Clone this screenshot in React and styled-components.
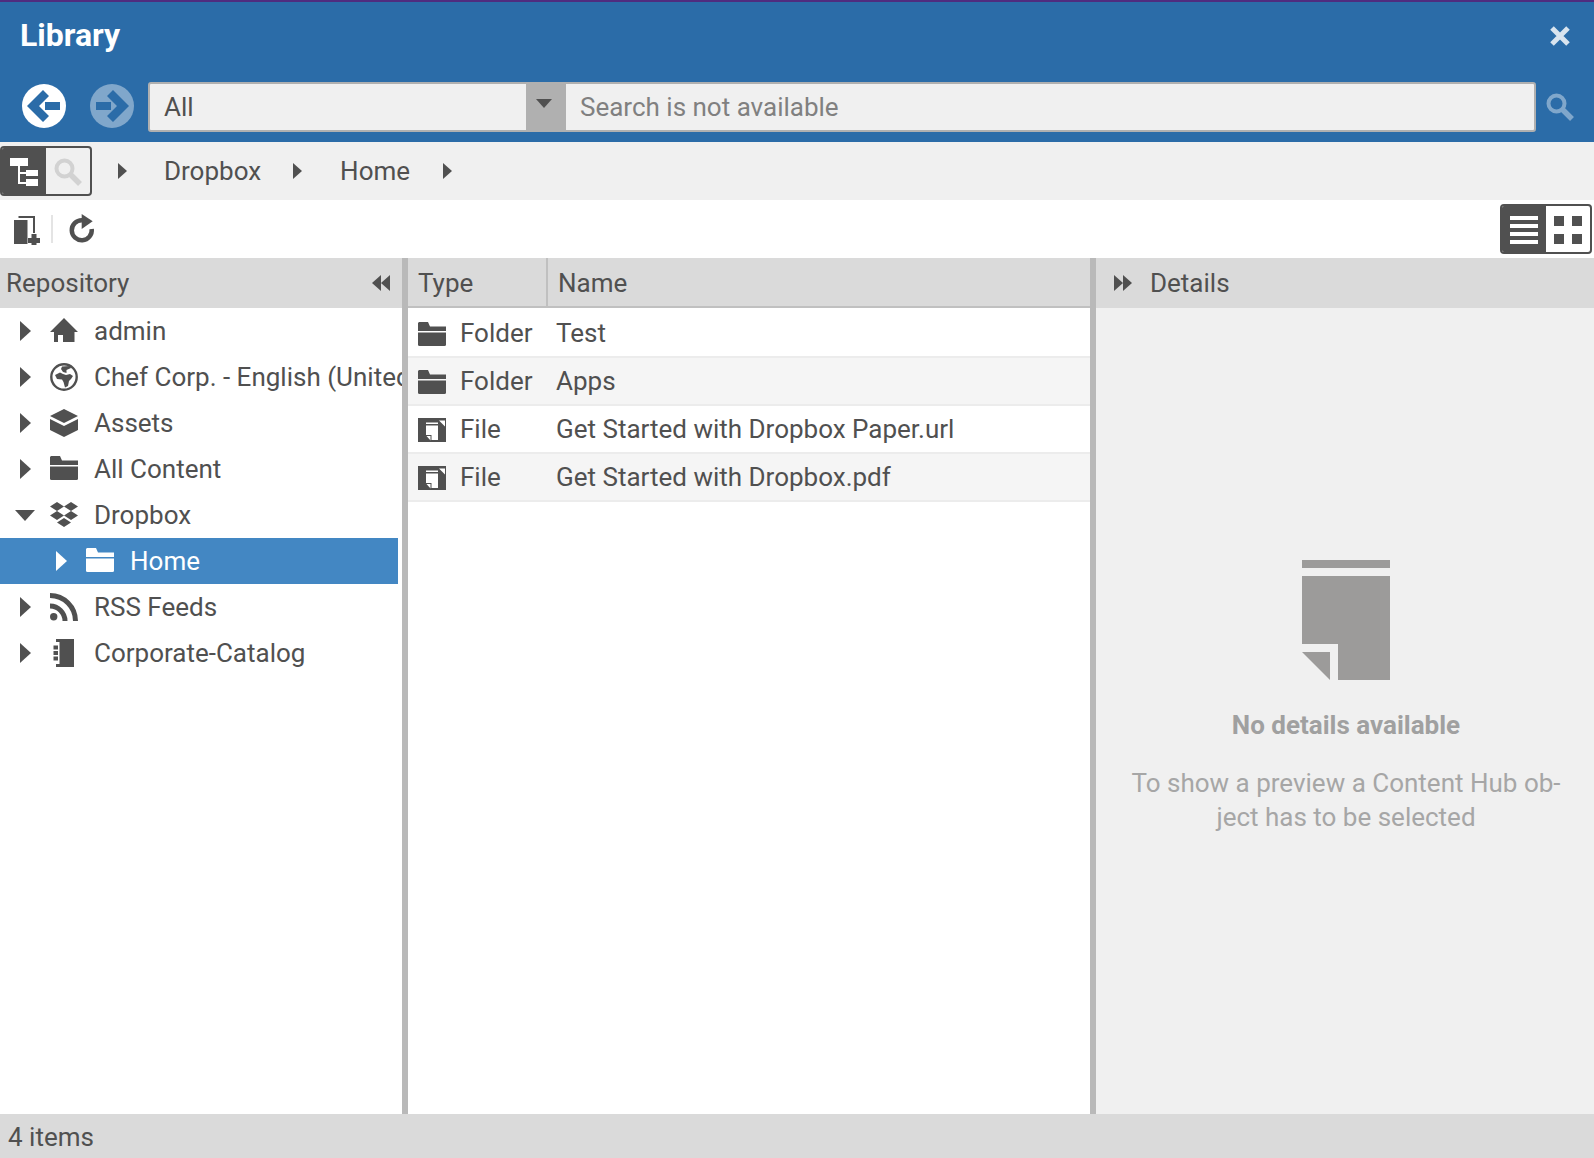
import React from "react";
import styled, { createGlobalStyle } from "styled-components";

const Global = createGlobalStyle`
  html, body { margin: 0; padding: 0; height: 100%; background: #fff; }
  #root { height: 100%; }
  * { box-sizing: border-box; }
`;

const Dark = "#505050";

const Page = styled.div`
  width: 1594px; height: 1158px; display: flex; flex-direction: column; overflow: hidden;
  font-family: Roboto, "Liberation Sans", sans-serif; font-size: 26px; color: ${Dark};
`;
const TopBar = styled.header`
  height: 142px; flex: none; background: #2b6ca8; border-top: 2px solid #4f2c7f;
  display: flex; flex-direction: column;
`;
const TitleRow = styled.div`
  height: 66px; display: flex; align-items: center; justify-content: space-between; padding: 0 24px 0 20px;
`;
const Title = styled.h1`
  margin: 0; font-size: 32px; font-weight: 700; color: #fff; line-height: 1;
`;
const CloseIcon = styled.svg`
  display: block; margin-top: 2px;
`;
const SearchRow = styled.div`
  display: flex; align-items: center; margin-top: 14px; padding-left: 22px; height: 50px;
`;
const NavButton = styled.span`
  width: 44px; height: 44px; flex: none; margin: -2px 24px 0 0; display: block;
  &:nth-child(2) { margin-right: 14px; opacity: 0.4; }
  svg { display: block; }
`;
const SearchBox = styled.div`
  width: 1388px; height: 50px; flex: none; display: flex; border: 2px solid #b0b0b0; border-radius: 3px; background: #f0f0f0;
`;
const ScopeValue = styled.div`
  width: 376px; padding-left: 14px; display: flex; align-items: center; color: ${Dark};
`;
const ScopeArrow = styled.div`
  width: 40px; background: #b0b0b0; display: flex; align-items: flex-start; justify-content: center; padding: 15px 4px 0 0;
`;
const SearchText = styled.div`
  flex: 1; padding-left: 14px; display: flex; align-items: center; color: #808080;
`;
const SearchIcon = styled.span`
  margin-left: 10px; display: block; opacity: 0.4; svg { display: block; }
`;
const CrumbBar = styled.nav`
  height: 58px; flex: none; background: #f0f0f0; display: flex; align-items: center;
`;
const Toggle = styled.div`
  width: ${p => p.$w}px; height: 50px; flex: none; display: flex; border: 2px solid ${Dark}; border-radius: 4px; overflow: hidden; background: ${p => p.$bg || "#fff"};
`;
const ToggleHalf = styled.span`
  flex: 1; display: flex; align-items: center; justify-content: center; padding-top: 2px; background: ${p => (p.$on ? Dark : "transparent")};
`;
const CrumbArrow = styled.span`
  display: block; flex: none; width: 0; height: 0; margin-left: ${p => p.$ml}px;
  border-left: 9px solid ${Dark}; border-top: 8px solid transparent; border-bottom: 8px solid transparent;
`;
const CrumbText = styled.span`
  margin-left: ${p => p.$ml}px; flex: none; line-height: 1;
`;
const ToolBar = styled.div`
  height: 58px; flex: none; background: #fff; display: flex; align-items: center; padding: 0 2px 0 14px;
`;
const ToolSep = styled.span`
  width: 2px; height: 28px; background: #e4e4e4; margin: 0 16px 0 11px; flex: none;
`;
const Spacer = styled.span` flex: 1; `;
const Columns = styled.main`
  flex: 1; display: grid; grid-template-columns: 402px 6px 682px 6px 498px; min-height: 0;
`;
const Divider = styled.div` background: #b9b9b9; `;
const Pane = styled.section`
  display: flex; flex-direction: column; min-width: 0; background: ${p => p.$bg || "#fff"};
`;
const PaneHead = styled.div`
  height: 50px; flex: none; background: #dadada; display: flex; align-items: center;
  padding: 0 ${p => p.$pr || 0}px 0 ${p => p.$pl || 0}px; justify-content: ${p => p.$between ? "space-between" : "flex-start"};
`;
const Tree = styled.ul`
  list-style: none; margin: 0; padding: 0;
`;
const TreeRow = styled.li`
  height: 46px; display: flex; align-items: center; white-space: nowrap; overflow: hidden;
  margin-right: ${p => (p.$selected ? 4 : 0)}px;
  padding-left: ${p => (p.$indent ? 56 : 20)}px;
  background: ${p => (p.$selected ? "#4387c3" : "transparent")};
  color: ${p => (p.$selected ? "#fff" : Dark)};
`;
const TreeCaret = styled.span`
  width: 11px; flex: none; display: block; svg { display: block; }
`;
const TreeIcon = styled.span`
  width: 28px; height: 28px; margin-left: 19px; margin-right: 16px; flex: none; display: block; svg { display: block; }
`;
const FolderSlot = styled.span`
  display: block; padding-top: 1px;
`;
const TableHead = styled.div`
  height: 50px; flex: none; display: grid; grid-template-columns: 138px 1fr; background: #dadada; border-bottom: 2px solid #c0c0c0;
`;
const HeadCell = styled.div`
  display: flex; align-items: center; padding: 2px 0 0 10px; & + & { border-left: 2px solid #c0c0c0; }
`;
const RowList = styled.div`
  padding-top: 2px; display: flex; flex-direction: column;
`;
const Row = styled.div`
  height: 48px; flex: none; display: flex; align-items: center; padding-left: 10px; border-bottom: 2px solid #ececec;
  background: ${p => (p.$alt ? "#f5f5f5" : "#fff")};
`;
const RowIcon = styled.span` width: 28px; height: 24px; margin-top: 2px; flex: none; display: block; svg { display: block; } `;
const RowType = styled.span` width: 110px; padding-left: 14px; flex: none; `;
const RowName = styled.span` white-space: nowrap; `;
const Empty = styled.div`
  flex: 1; display: flex; flex-direction: column; align-items: center; padding: 252px 0 0 2px; text-align: center;
`;
const EmptyTitle = styled.div`
  margin-top: 28px; font-weight: 700; color: #a0a0a0; line-height: 34px;
`;
const EmptyText = styled.div`
  margin-top: 24px; color: #a6a6a6; line-height: 34px; width: 440px;
`;
const Status = styled.footer`
  height: 44px; flex: none; background: #dadada; display: flex; align-items: center; padding: 2px 0 0 8px;
`;

const Caret = ({ open, color = Dark }) =>
  open ? (
    <svg width="20" height="11" viewBox="0 0 20 11" style={{ marginLeft: -5 }}><path d="M0 0H20L10 11Z" fill={color} /></svg>
  ) : (
    <svg width="11" height="20" viewBox="0 0 11 20"><path d="M0 0L11 10L0 20Z" fill={color} /></svg>
  );

const Folder = ({ color = Dark }) => (
  <svg width="28" height="24" viewBox="0 0 28 24" fill={color}>
    <path d="M1 0H10L12 4.5H28V9H0V1Z" />
    <path d="M0 10.5H28V22.5Q28 24 26.5 24H1.5Q0 24 0 22.5Z" />
  </svg>
);
const FileIcon = () => (
  <svg width="28" height="24" viewBox="0 0 28 24">
    <rect width="28" height="24" fill={Dark} />
    <path fill="#fff" d="M8 4.5H20V6H8ZM21 2.5H27V8.5ZM8 7.5H20V22H13.5V17H8ZM8.5 18H12.5V22.5Z" />
  </svg>
);
const Icons = {
  home: <svg width="28" height="28" viewBox="0 0 28 28" fill={Dark}><path d="M14 1L28 15H24.5V25H13V18H8V25H4V15H0Z" /></svg>,
  globe: (
    <svg width="28" height="28" viewBox="0 0 28 28">
      <circle cx="14" cy="14" r="12.7" fill="none" stroke={Dark} strokeWidth="2.4" />
      <path fill={Dark} d="M12 3.5L20 3L21 5L16.5 7L16.5 10L13 9L11 6ZM5 12L10 9.5L13 11L16 12L20 11L23 13L21 16L19 18L18 23L15 24.5L13.5 19L12 16.5L7 16Z" />
    </svg>
  ),
  box: <svg width="28" height="28" viewBox="0 0 28 28" fill={Dark}><path d="M14 0L28 7L14 14L0 7ZM0 10L14 17L28 10V21L14 28L0 21Z" /></svg>,
  folder: <FolderSlot><Folder /></FolderSlot>,
  homeFolder: <FolderSlot><Folder color="#fff" /></FolderSlot>,
  dropbox: <svg width="28" height="28" viewBox="0 0 28 28" fill={Dark}><path d="M7 1L14 5.5L7 10L0 5.5ZM21 1L28 5.5L21 10L14 5.5ZM7 10L14 14.5L7 19L0 14.5ZM21 10L28 14.5L21 19L14 14.5ZM14 17L21 21.5L14 26L7 21.5Z" /></svg>,
  rss: (
    <svg width="28" height="28" viewBox="0 0 28 28" fill="none" stroke={Dark} strokeWidth="5">
      <circle cx="3.7" cy="23.7" r="3.7" fill={Dark} stroke="none" />
      <path d="M0 13A15 15 0 0 1 15 28" />
      <path d="M0 2.5A25.5 25.5 0 0 1 25.5 28" />
    </svg>
  ),
  book: <svg width="28" height="28" viewBox="0 0 28 28" fill={Dark}><path d="M6 0H24V28H6V25H9.5V3H6ZM3.5 6.5H8V10.5H3.5ZM3.5 12H8V16H3.5ZM3.5 17.5H8V21.5H3.5Z" /></svg>,
};

const treeItems = [
  ["admin", "home"],
  ["Chef Corp. - English (United States)", "globe"],
  ["Assets", "box"],
  ["All Content", "folder"],
  ["Dropbox", "dropbox", { open: true }],
  ["Home", "homeFolder", { selected: true }],
  ["RSS Feeds", "rss"],
  ["Corporate-Catalog", "book"],
];
const rows = [
  ["Folder", "Test"],
  ["Folder", "Apps"],
  ["File", "Get Started with Dropbox Paper.url"],
  ["File", "Get Started with Dropbox.pdf"],
];

const Magnifier = ({ color, size }) => (
  <svg width={size} height={size} viewBox="0 0 28 28">
    <circle cx="10.5" cy="10.5" r="8" fill="none" stroke={color} strokeWidth="4" />
    <path d="M16 16L26 26" stroke={color} strokeWidth="5.5" />
  </svg>
);
const DoubleArrow = ({ flip }) => (
  <svg width="18" height="16" viewBox="0 0 18 16" fill={Dark} style={flip ? { transform: "scaleX(-1)" } : undefined}>
    <path d="M0 0L9 8L0 16ZM9 0L18 8L9 16Z" />
  </svg>
);

export default function App() {
  return (
    <Page>
      <Global />
      <TopBar>
        <TitleRow>
          <Title>Library</Title>
          <CloseIcon width="20" height="20" viewBox="0 0 20 20"><path d="M2 2L18 18M18 2L2 18" stroke="#d8e4ef" strokeWidth="5" /></CloseIcon>
        </TitleRow>
        <SearchRow>
          <NavButton>
            <svg width="44" height="44" viewBox="0 0 44 44">
              <circle cx="22" cy="22" r="22" fill="#fff" />
              <path d="M21 6L27 12L17 22L27 32L21 38L5 22ZM23 18H38V26H23Z" fill="#2b6ca8" />
            </svg>
          </NavButton>
          <NavButton>
            <svg width="44" height="44" viewBox="0 0 44 44">
              <circle cx="22" cy="22" r="22" fill="#fff" />
              <path d="M23 6L17 12L27 22L17 32L23 38L39 22ZM21 18H6V26H21Z" fill="#2b6ca8" />
            </svg>
          </NavButton>
          <SearchBox>
            <ScopeValue>All</ScopeValue>
            <ScopeArrow>
              <svg width="16" height="9" viewBox="0 0 16 9"><path d="M0 0H16L8 9Z" fill={Dark} /></svg>
            </ScopeArrow>
            <SearchText>Search is not available</SearchText>
          </SearchBox>
          <SearchIcon><Magnifier color="#fff" size={28} /></SearchIcon>
        </SearchRow>
      </TopBar>

      <CrumbBar>
        <Toggle $w={92} $bg="#f0f0f0">
          <ToggleHalf $on>
            <svg width="28" height="28" viewBox="0 0 28 28" fill="#fff">
              <rect width="18" height="8" />
              <rect x="8" y="8" width="2" height="18" />
              <rect x="8" y="14" width="8" height="2" />
              <rect x="8" y="24" width="8" height="2" />
              <rect x="16" y="12" width="12" height="6" />
              <rect x="16" y="21" width="12" height="7" />
            </svg>
          </ToggleHalf>
          <ToggleHalf><Magnifier color="#d2d2d2" size={28} /></ToggleHalf>
        </Toggle>
        <CrumbArrow $ml={26} />
        <CrumbText $ml={37}>Dropbox</CrumbText>
        <CrumbArrow $ml={32} />
        <CrumbText $ml={38}>Home</CrumbText>
        <CrumbArrow $ml={33} />
      </CrumbBar>

      <ToolBar>
        <svg width="26" height="32" viewBox="0 -3 26 32" fill={Dark}>
          <path d="M4.5 0H21V17H19V2H4.5Z" />
          <path d="M0 4H13.5V28H0Z" />
          <path d="M17.5 18H22.5V22H26V27H22.5V29H17.5V27H14V22H17.5Z" />
        </svg>
        <ToolSep />
        <svg width="26" height="30" viewBox="0 0 26 30">
          <path d="M13 6.2A10 10 0 1 0 22.7 15" fill="none" stroke={Dark} strokeWidth="4.5" />
          <path d="M12.7 0L23.7 7.3L12.7 15Z" fill={Dark} />
        </svg>
        <Spacer />
        <Toggle $w={92}>
          <ToggleHalf $on>
            <svg width="28" height="28" viewBox="0 0 28 28" fill="#fff">
              <rect y="0" width="28" height="4" /><rect y="8" width="28" height="4" /><rect y="16" width="28" height="4" /><rect y="24" width="28" height="4" />
            </svg>
          </ToggleHalf>
          <ToggleHalf>
            <svg width="28" height="28" viewBox="0 0 28 28" fill={Dark}>
              <rect width="10" height="10" /><rect x="18" width="10" height="10" /><rect y="18" width="10" height="10" /><rect x="18" y="18" width="10" height="10" />
            </svg>
          </ToggleHalf>
        </Toggle>
      </ToolBar>

      <Columns>
        <Pane>
          <PaneHead $pl={6} $pr={12} $between>
            Repository
            <DoubleArrow flip />
          </PaneHead>
          <Tree>
            {treeItems.map(([label, icon, o = {}]) => (
              <TreeRow key={label} $selected={o.selected} $indent={o.selected}>
                <TreeCaret><Caret open={o.open} color={o.selected ? "#fff" : Dark} /></TreeCaret>
                <TreeIcon>{Icons[icon]}</TreeIcon>
                {label}
              </TreeRow>
            ))}
          </Tree>
        </Pane>
        <Divider />
        <Pane>
          <TableHead>
            <HeadCell>Type</HeadCell>
            <HeadCell>Name</HeadCell>
          </TableHead>
          <RowList>
            {rows.map(([type, name], i) => (
              <Row key={name} $alt={i % 2 === 1}>
                <RowIcon>{type === "Folder" ? <Folder /> : <FileIcon />}</RowIcon>
                <RowType>{type}</RowType>
                <RowName>{name}</RowName>
              </Row>
            ))}
          </RowList>
        </Pane>
        <Divider />
        <Pane $bg="#f0f0f0">
          <PaneHead $pl={18}>
            <DoubleArrow />
            <CrumbText $ml={18}>Details</CrumbText>
          </PaneHead>
          <Empty>
            <svg width="88" height="120" viewBox="0 0 88 120" fill="#9c9b9a">
              <rect width="88" height="8" />
              <path d="M0 16H88V120H36V84H0Z" />
              <path d="M0 92H28V120Z" />
            </svg>
            <EmptyTitle>No details available</EmptyTitle>
            <EmptyText>To show a preview a Content Hub ob-<br />ject has to be selected</EmptyText>
          </Empty>
        </Pane>
      </Columns>

      <Status>4 items</Status>
    </Page>
  );
}
